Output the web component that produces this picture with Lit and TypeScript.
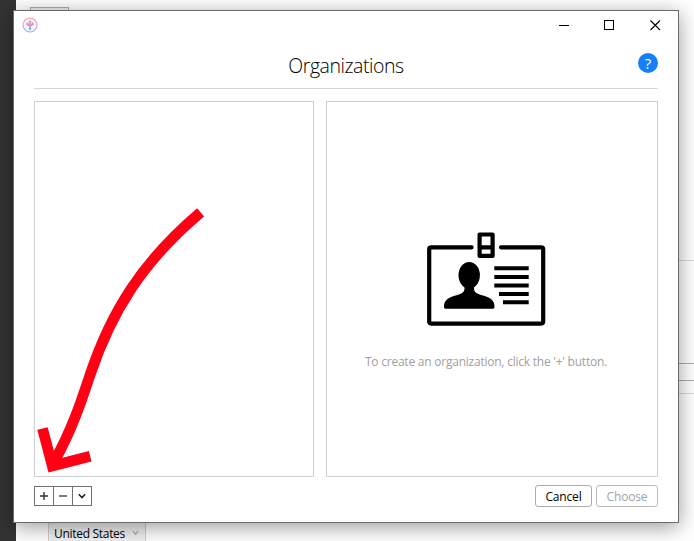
import { LitElement, html, css } from "lit";
import { customElement } from "lit/decorators.js";

@customElement("app-root")
export class AppRoot extends LitElement {
  static styles = css`
    :host {
      display: block;
      position: relative;
      width: 694px;
      height: 541px;
      overflow: hidden;
      background: #fff;
      font-family: "Open Sans", "Noto Sans", sans-serif;
      font-size: 12px;
      color: #000;
    }
    * { box-sizing: border-box; }
    svg { display: block; }
    .backdrop { position: absolute; inset: 0; }
    .rail { position: absolute; left: 0; top: 0; width: 16px; height: 541px; background: #333; }
    .tab { position: absolute; left: 30px; top: 7px; width: 39px; height: 10px; border: 1px solid #adadad; background: #efefef; }
    .rule { position: absolute; left: 670px; width: 24px; height: 1px; background: #d9d9d9; }
    .rule.strong { background: #adadb0; }
    .r1 { top: 260px; }
    .r2 { top: 363px; }
    .r3 { top: 380px; }
    .r4 { top: 393px; }
    .country {
      position: absolute; left: 48px; top: 515px; width: 98px; height: 26px;
      padding: 10px 6px 0 5px; border: 1px solid #d0d0d0; border-bottom: 0; background: #f0f0f0;
      display: flex; justify-content: space-between;
      line-height: 15px; white-space: nowrap; letter-spacing: -0.3px;
    }
    .country svg { margin-top: 4px; }
    .window {
      position: absolute; left: 13px; top: 10px; width: 666px; height: 513px;
      border: 1px solid #6b6b6b; background: #fff;
      box-shadow: 0 4px 20px rgba(0, 0, 0, 0.4);
      display: flex; flex-direction: column;
      padding: 0 20px;
    }
    .titlebar { height: 28px; display: flex; justify-content: space-between; align-items: center; margin: 0 -3px 0 -12px; }
    .controls { display: flex; gap: 35px; }
    .min { margin-right: -1px; }
    .head { height: 50px; border-bottom: 1px solid #d5d5d5; display: grid; grid-template-columns: 20px 1fr 20px; }
    h1 { margin: 0; font-weight: 300; font-size: 19.5px; letter-spacing: -0.45px; line-height: 28px; padding-top: 13px; text-align: center; }
    .help {
      width: 20px; height: 20px; margin-top: 14px; border-radius: 50%;
      background: #157efb; color: #fff; font-size: 15px; line-height: 20px; text-align: center;
    }
    .panels { display: flex; gap: 12px; margin-top: 12px; height: 376px; }
    .panel { border: 1px solid #cfcfcf; }
    .list { width: 280px; }
    .detail { flex: 1; display: flex; flex-direction: column; align-items: center; }
    .badge { margin-top: 130px; margin-right: 12px; }
    .hint { margin: 25px 12px 0 0; line-height: 18px; letter-spacing: -0.23px; color: #a0a0a0; white-space: nowrap; }
    .foot { display: flex; justify-content: space-between; margin-top: 8px; }
    .tools { display: flex; width: 58px; height: 20px; margin-top: 1px; border: 1px solid #707070; }
    .tool { width: 19px; border-right: 1px solid #707070; display: grid; place-items: center; }
    .tool:last-child { border: 0; width: 18px; }
    .actions { display: flex; gap: 4px; }
    .btn { height: 22px; width: 57px; border: 1px solid #ababab; border-radius: 3px; text-align: center; line-height: 21px; letter-spacing: -0.15px; }
    .btn.off { width: 62px; color: #a2a2a2; border-color: #bcbcbc; }
    .arrow { position: absolute; left: 0; top: 0; }
  `;

  render() {
    return html`
      <div class="backdrop">
        <div class="rail"></div>
        <div class="tab"></div>
        <div class="rule r1"></div>
        <div class="rule strong r2"></div>
        <div class="rule strong r3"></div>
        <div class="rule r4"></div>
        <div class="country">
          <span>United States</span>
          <svg width="7" height="6" viewBox="0 0 7 6" fill="none" stroke="#aaa" stroke-width="1.2"><path d="M1 1l2.5 3.2L6 1" /></svg>
        </div>
      </div>
      <div class="window">
        <div class="titlebar">
          <svg width="16" height="16" viewBox="0 0 16 16" fill="none">
            <defs>
              <linearGradient id="ring" x1="0" y1="0" x2="0" y2="1">
                <stop offset="0" stop-color="#f79a9c" />
                <stop offset="0.55" stop-color="#c7a3e8" />
                <stop offset="1" stop-color="#6cc3f5" />
              </linearGradient>
            </defs>
            <circle cx="8" cy="8" r="7" fill="#fbf3fa" stroke="url(#ring)" stroke-width="1.1" />
            <path d="M8 4v8M5.3 6.5v1L8 9.2l2.7-1.7v-1" stroke="#d08ccb" stroke-width="1.5" />
            <path d="M8 3l1.5 2h-3zM4.5 5.5h2v2h-2zM9.5 5.5h2v2h-2z" fill="#f08fa6" />
            <circle cx="8" cy="11.8" r="1.2" fill="#52b9f2" />
          </svg>
          <div class="controls">
            <svg class="min" width="11" height="11" shape-rendering="crispEdges"><path d="M0 5.5h10" stroke="#000" /></svg>
            <svg width="11" height="11" shape-rendering="crispEdges"><path d="M.5.5h9v9h-9z" fill="none" stroke="#000" /></svg>
            <svg width="11" height="11"><path d="M.5.5l9.5 9.5M10 .5L.5 10" stroke="#000" stroke-width="1.1" /></svg>
          </div>
        </div>
        <div class="head">
          <span></span>
          <h1>Organizations</h1>
          <div class="help">?</div>
        </div>
        <div class="panels">
          <div class="panel list"></div>
          <div class="panel detail">
            <svg class="badge" width="120" height="96" viewBox="426 232 120 96">
              <g fill="none" stroke="#000" stroke-width="4.2" stroke-linecap="round">
                <path d="M471.6 247.3H431.2a2 2 0 0 0-2 2v72.3a2 2 0 0 0 2 2H541.2a2 2 0 0 0 2-2V249.3a2 2 0 0 0-2-2H501" />
                <path d="M479.6 234.5h13v21.4h-13zM479.6 247.4h13" stroke-linejoin="round" />
              </g>
              <ellipse cx="469.2" cy="275.3" rx="10.7" ry="13.4" />
              <path d="M464.5 285v3.5c0 4-3 5.2-8 6.7-8 2.3-12.5 4.5-12.5 11.5 0 1.5.6 2 2 2h46.5c1.4 0 2-.5 2-2 0-7-4.5-9.2-12.5-11.5-5-1.5-8-2.7-8-6.7V285z" />
              <path d="M494.3 266.3h34.4v4h-34.4zM494.3 275h34.4v4h-34.4zM494.3 283.5h34.4v4h-34.4zM499 291.9h29.7v4H499zM503 300.2h25.7v4.1H503z" />
            </svg>
            <p class="hint">To create an organization, click the '+' button.</p>
          </div>
        </div>
        <div class="foot">
          <div class="tools">
            <div class="tool"><svg width="8" height="8"><path d="M4 0v8M0 4h8" stroke="#333" stroke-width="1.4" /></svg></div>
            <div class="tool"><svg width="8" height="8"><path d="M0 4h8" stroke="#444" stroke-width="1.4" /></svg></div>
            <div class="tool"><svg width="8" height="8" fill="none"><path d="M.8 2.3L4 5.5l3.2-3.2" stroke="#222" stroke-width="1.6" /></svg></div>
          </div>
          <div class="actions">
            <div class="btn">Cancel</div>
            <div class="btn off">Choose</div>
          </div>
        </div>
      </div>
      <svg class="arrow" width="220" height="490" fill="none" stroke="#ff0015" stroke-width="10.7">
        <path d="M200.6 212.3C142 262 111 312 90 375C83 396 73 428 54.5 461" />
        <path d="M42.5 428.5L52.3 465.9L90.2 456.3" />
      </svg>
    `;
  }
}
